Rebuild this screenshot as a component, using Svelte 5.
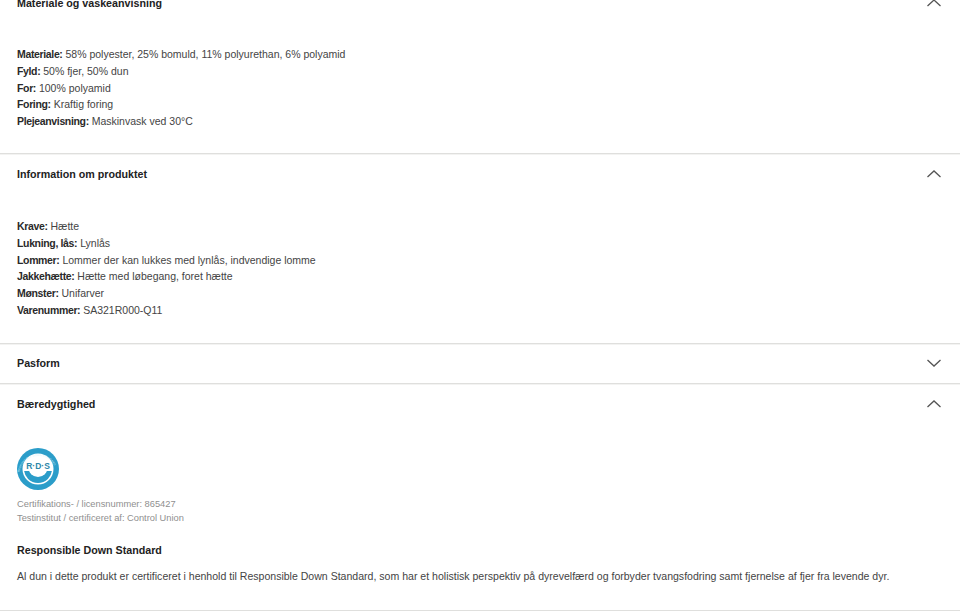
<script lang="ts">
  const materials = [
    ['Materiale', '58% polyester, 25% bomuld, 11% polyurethan, 6% polyamid'],
    ['Fyld', '50% fjer, 50% dun'],
    ['For', '100% polyamid'],
    ['Foring', 'Kraftig foring'],
    ['Plejeanvisning', 'Maskinvask ved 30°C']
  ]

  const productInfo = [
    ['Krave', 'Hætte'],
    ['Lukning, lås', 'Lynlås'],
    ['Lommer', 'Lommer der kan lukkes med lynlås, indvendige lomme'],
    ['Jakkehætte', 'Hætte med løbegang, foret hætte'],
    ['Mønster', 'Unifarver'],
    ['Varenummer', 'SA321R000-Q11']
  ]
</script>

{#snippet chevron(open)}
  <svg class="chevron" width="16" height="10" viewBox="0 0 16 10" aria-hidden="true">
    <path d={open ? 'M1.5 8 L8 2 L14.5 8' : 'M1.5 2 L8 8 L14.5 2'} />
  </svg>
{/snippet}

{#snippet header(title, open)}
  <div class="acc-header">
    <span class="acc-title">{title}</span>
    {@render chevron(open)}
  </div>
{/snippet}

{#snippet specs(rows)}
  <div class="acc-body">
    {#each rows as [label, value]}
      <div class="spec"><b>{label}:</b> {value}</div>
    {/each}
  </div>
{/snippet}

<main class="page">
  <section class="acc">
    {@render header('Materiale og vaskeanvisning', true)}
    {@render specs(materials)}
  </section>

  <section class="acc info">
    {@render header('Information om produktet', true)}
    {@render specs(productInfo)}
  </section>

  <section class="acc fit">
    {@render header('Pasform', false)}
  </section>

  <section class="acc">
    {@render header('Bæredygtighed', true)}
    <div class="acc-body sustain">
      <svg class="logo" width="42" height="42" viewBox="0 0 42 42" role="img" aria-label="RDS">
        <defs>
          <path id="ring" d="M2.5 24 A18.7 18.7 0 0 1 39.5 24" />
          <clipPath id="smile"><rect x="0" y="23" width="42" height="19" /></clipPath>
        </defs>
        <circle cx="21" cy="21" r="21" fill="#2b9dc9" />
        <circle cx="21" cy="21" r="15.5" fill="#fff" />
        <circle cx="21" cy="21" r="14" fill="#2b9dc9" clip-path="url(#smile)" />
        <circle cx="21" cy="19.5" r="9.5" fill="#fff" clip-path="url(#smile)" />
        <text class="ring-text"><textPath href="#ring">RESPONSIBLE DOWN STANDARD</textPath></text>
        <text class="rds" x="21" y="20.5" text-anchor="middle">R·D·S</text>
      </svg>
      <div class="cert">
        <div>Certifikations- / licensnummer: 865427</div>
        <div>Testinstitut / certificeret af: Control Union</div>
      </div>
      <h3>Responsible Down Standard</h3>
      <p>Al dun i dette produkt er certificeret i henhold til Responsible Down Standard, som har et holistisk perspektiv på dyrevelfærd og forbyder tvangsfodring samt fjernelse af fjer fra levende dyr.</p>
    </div>
  </section>
</main>

<style>
  :global(body) {
    margin: 0;
    background: #fff;
    overflow: hidden;
  }

  .page {
    margin-top: -18px;
    font-family: "Liberation Sans", Arial, sans-serif;
    color: #444;
  }

  .acc {
    border-bottom: 1px solid #dfdfdd;
    box-shadow: 0 1px 0 #f3f3f2;
  }

  .acc-header {
    height: 40px;
    padding: 1px 17px 0;
    box-sizing: border-box;
    display: flex;
    align-items: center;
    justify-content: space-between;
  }

  .fit .acc-header {
    height: 39px;
    padding-top: 0;
  }

  .acc-title {
    font-size: 10.7px;
    font-weight: 700;
    color: #222;
  }

  .chevron {
    margin-right: 1px;
    fill: none;
    stroke: #555;
    stroke-width: 1.3;
  }

  .acc-body {
    padding: 24px 17px 23px;
    font-size: 10.5px;
    line-height: 16.8px;
  }

  .info .acc-body {
    padding-bottom: 24.2px;
  }

  .spec b {
    letter-spacing: -0.35px;
    font-weight: 700;
    color: #2a2a2a;
  }

  .sustain {
    padding-bottom: 26px;
  }

  .logo {
    display: block;
  }

  .ring-text {
    font-size: 2.7px;
    letter-spacing: 0.1px;
    fill: #d8f0f8;
  }

  .rds {
    font-size: 8.5px;
    font-weight: 700;
    fill: #2b86a8;
  }

  .cert {
    margin-top: 7px;
    font-size: 9.3px;
    line-height: 14px;
    color: #8f8f8f;
  }

  h3 {
    margin: 17px 0 0;
    font-size: 10.7px;
    line-height: 16px;
    font-weight: 700;
    color: #222;
  }

  p {
    margin: 10px 0 0;
    font-size: 10.55px;
    line-height: 16px;
  }
</style>
